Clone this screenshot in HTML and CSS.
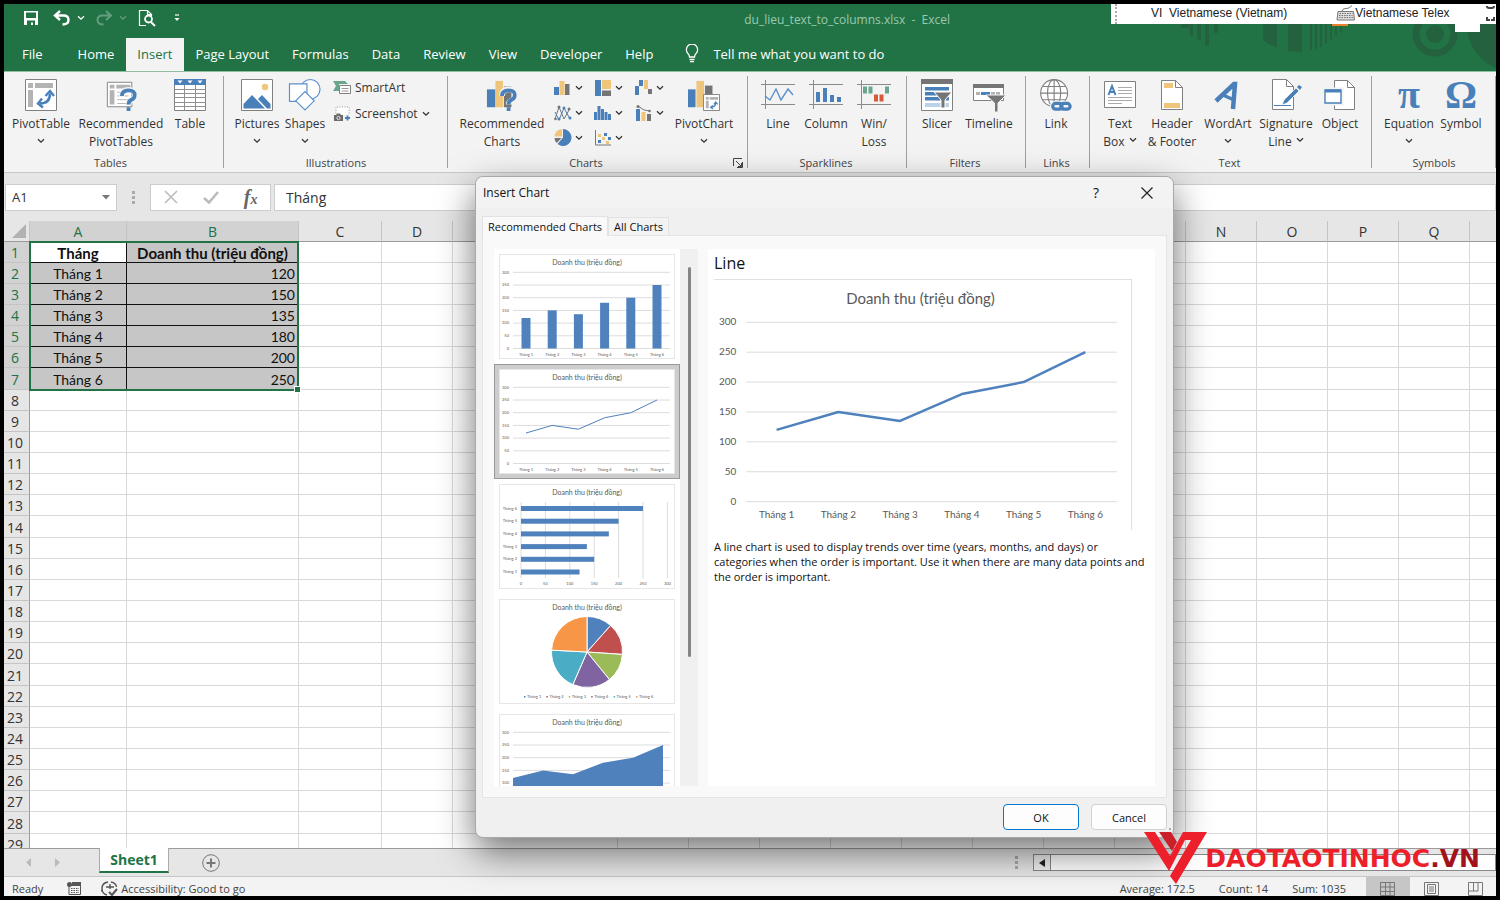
FILE: index.html
```html
<!DOCTYPE html>
<html lang="en">
<head>
    <meta charset="UTF-8">
    <meta name="viewport" content="width=device-width, initial-scale=1.0">
    <title>du_lieu_text_to_columns.xlsx - Excel</title>
    <link rel="stylesheet" href="styles.css">
</head>
<body>
    <svg class="defs" width="0" height="0" aria-hidden="true">
        <symbol id="chev" viewBox="0 0 8 6"><path d="M1 1.2l3 3 3-3" fill="none" stroke="currentColor" stroke-width="1.3"/></symbol>
    </svg>
    <div class="app">
        <header class="top">
            <svg class="pattern" width="385" height="68" viewBox="0 0 385 68" aria-hidden="true">
                <g fill="#24623f">
                    <path d="M79 20h3v12h-3zM86 20h4v16h-4zM94 20h4v22h-4zM103 20h4v9h-4zM70 20h8v4h-8z"/>
                    <path d="M71 20h14v23q-9-2-14-7z" transform="translate(81 0)"/>
                    <path d="M177 20h14v28l-14-1z"/>
                    <path d="M199 20h2v26h-2zM204 20h2v25h-2zM209 20h2v23h-2zM214 20h2v20h-2zM219 20h2v16h-2zM224 20h2v12h-2zM229 20h2v8h-2z"/>
                    <path d="M278 20q4 34 30 44V20z" transform="translate(77 0)"/>
                </g>
                <circle cx="324" cy="30" r="19" fill="none" stroke="#24623f" stroke-width="7"/>
                <circle cx="324" cy="30" r="9" fill="#24623f"/>
                <path d="M221 20h16v2h-16z" fill="#e8822b"/>
                <path d="M344 20h25v8h-25z" fill="#fff"/>
            </svg>
            <div class="title-row">
                <div class="quick">
                    <button aria-label="Save"><svg width="16" height="16" viewBox="0 0 16 16"><path d="M1 1h14v14H1z" fill="#fff"/><path d="M3 2.500h10v5.500H3zM4 10.500h8V15h-2v-2.500H8V15H4z" fill="#217346"/></svg></button>
                    <button aria-label="Undo" class="undo"><svg width="18" height="16" viewBox="0 0 18 16"><path d="M7 1L2 5.500 7 10M2.500 5.500h8q5 0 5 4.500t-6 4.500" fill="none" stroke="#fff" stroke-width="2.400"/></svg></button>
                    <svg class="mini" width="8" height="6"><use href="#chev"/></svg>
                    <button aria-label="Redo" class="faded redo"><svg width="18" height="16" viewBox="0 0 18 16"><path d="M11 1l5 4.500L11 10M15.500 5.500h-8q-5 0-5 4.500t6 4.500" fill="none" stroke="#fff" stroke-width="2"/></svg></button>
                    <svg class="mini faded" width="8" height="6"><use href="#chev"/></svg>
                    <button aria-label="Print preview" class="preview-btn"><svg width="18" height="18" viewBox="0 0 18 18"><path d="M8 16.500H1.500V1.500h8l4 4V7M9.500 1.500v4h4" fill="none" stroke="#fff" stroke-width="1.200"/><circle cx="10.500" cy="10" r="3.500" fill="none" stroke="#fff" stroke-width="1.800"/><path d="M13 13l4 4" stroke="#fff" stroke-width="2"/></svg></button>
                    <button aria-label="Customize toolbar" class="more"><svg width="6" height="8" viewBox="0 0 6 8"><path d="M1 1h4" stroke="#fff" stroke-width="1.200"/><path d="M.5 4h5L3 7z" fill="#fff"/></svg></button>
                </div>
                <h1 class="file-name">du_lieu_text_to_columns.xlsx&nbsp; -&nbsp; Excel</h1>
                <div class="lang-bar">
                    <span class="grip"></span>
                    <button class="lang">VI&nbsp; Vietnamese (Vietnam)</button>
                    <button class="lang"><svg width="19" height="17" viewBox="0 0 19 17"><path d="M2 6.500h15.500l1 8.500H1z" fill="#ddd" stroke="#777"/><path d="M3.500 8.500h13M3 10.500h13.500M3 12.500h14" stroke="#777" stroke-width="1.200" stroke-dasharray="1.500 1"/><path d="M6 6q1-3 4-2.500t6-3" fill="none" stroke="#777"/></svg>Vietnamese Telex</button>
                    <svg class="lang-end" width="10" height="18" viewBox="0 0 10 18"><path d="M1 1q0 2 2 2h3q2 0 2-2M1 12v3h3M8 12v3H5" fill="none" stroke="#444" stroke-width="2"/></svg>
                </div>
            </div>
            <nav class="tabs">
                <button class="tab file">File</button>
                <button class="tab">Home</button>
                <button class="tab active">Insert</button>
                <button class="tab">Page Layout</button>
                <button class="tab">Formulas</button>
                <button class="tab">Data</button>
                <button class="tab">Review</button>
                <button class="tab">View</button>
                <button class="tab">Developer</button>
                <button class="tab">Help</button>
                <button class="tab tell"><svg width="14" height="19" viewBox="0 0 14 19"><path d="M4.500 13q0-2.200-1.800-3.800A5.600 5.600 0 1 1 11.300 9.200Q9.500 10.800 9.500 13zM4.500 15.500h5M5 17.700h4" fill="none" stroke="#fff" stroke-width="1.300"/></svg>Tell me what you want to do</button>
            </nav>
        </header>

        <div class="ribbon">
            <section class="group g-tables">
                <div class="tools">
                    <button class="tool w70">
                        <svg width="32" height="32" viewBox="0 0 32 32"><path d="M.5.500h31v31H.500z" fill="#fff" stroke="#808080"/><path d="M3 4h5v5H3zM10 4h18v5H10zM3 11h5v17H3z" fill="#b3b3b3"/><path d="M15 24.500q10 0 10-10" fill="none" stroke="#4a80b9" stroke-width="2.600"/><path d="M20.500 17l4.500-5 4 5M17 19.500L13 24.500l5 4" fill="none" stroke="#4a80b9" stroke-width="2.400"/></svg>
                        <span>PivotTable</span><svg class="drop" width="8" height="6"><use href="#chev"/></svg>
                    </button>
                    <button class="tool w90">
                        <svg width="32" height="34" viewBox="0 0 32 34"><path d="M1.500 3.500h26v26h-26z" fill="#fff" stroke="#808080"/><path d="M4 6h5v4H4zM11 6h15v4H11zM4 12h5v15H4z" fill="#b3b3b3"/><path d="M12 14h12M12 18h12M12 22h12M12 26h12" stroke="#b3b3b3"/><path d="M17 19q0-7.500 7-7.500t6.500 6q0 3-3.500 5-3 1.500-3 5" fill="none" stroke="#f3f3f3" stroke-width="6"/><path d="M17 18q0-6 7-6t6.500 5.500q0 3-3.500 4.500-3 1.500-3 5" fill="none" stroke="#4a80b9" stroke-width="4"/><path d="M22 30h4v4h-4z" fill="#4a80b9"/></svg>
                        <span>Recommended<br>PivotTables</span>
                    </button>
                    <button class="tool w48">
                        <svg width="32" height="32" viewBox="0 0 32 32"><path d="M.5.500h31v31H.500z" fill="#fff" stroke="#808080"/><path d="M.5 10.500h31M.5 14.500h31M.5 18.500h31M.5 23.500h31M.5 27.500h31M10.500 5v26M21.500 5v26" stroke="#909090"/><path d="M0 0h32v6H0z" fill="#4a80b9"/><path d="M3.500 1.500h5L6 4.500zM13.500 1.500h5L16 4.500zM23.500 1.500h5L26 4.500z" fill="#fff"/></svg>
                        <span>Table</span>
                    </button>
                </div>
                <h2>Tables</h2>
            </section>
            <section class="group g-illus wide">
                <div class="tools">
                    <button class="tool w48">
                        <svg width="32" height="32" viewBox="0 0 32 32"><path d="M.5.500h31v31H.500z" fill="#fff" stroke="#808080"/><circle cx="24" cy="8" r="3.200" fill="#eec57a"/><path d="M2.500 29.500V25L11 16l13 13.500z" fill="#4a80b9"/><path d="M17 20l4-4 8.500 9v4.500H26z" fill="#4a80b9"/></svg>
                        <span>Pictures</span><svg class="drop" width="8" height="6"><use href="#chev"/></svg>
                    </button>
                    <button class="tool w48">
                        <svg width="34" height="33" viewBox="0 0 34 33"><g fill="#fff" stroke="#5b90cc" stroke-width="1.200"><circle cx="22.500" cy="10.500" r="10"/><path d="M1 5h18v18H1z"/><path d="M17 13l9.500 9.500L17 32l-9.500-9.500z"/></g></svg>
                        <span>Shapes</span><svg class="drop" width="8" height="6"><use href="#chev"/></svg>
                    </button>
                    <div class="small-tools">
                        <button class="small"><svg width="18" height="16" viewBox="0 0 18 16"><path d="M0 1h12l3 3h-9v7H0l3-5z" fill="#6aa58d"/><path d="M6.500 5.500h11v8h-11z" fill="#fff" stroke="#808080"/><path d="M8.500 8.500h7M8.500 11h7" stroke="#999"/></svg>SmartArt</button>
                        <button class="small"><svg width="18" height="16" viewBox="0 0 18 16"><path d="M3 10V1h13v7" fill="#fff" stroke="#999" stroke-dasharray="1 1.500"/><path d="M1 9h2l1-1.500h3L8 9h2v6H1z" fill="#6b6b6b"/><circle cx="5.500" cy="12" r="1.600" fill="#6b6b6b" stroke="#fff" stroke-width=".8"/><path d="M12 12h5M14.500 9.500v5" stroke="#4a80b9" stroke-width="1.800"/></svg>Screenshot<svg class="side" width="8" height="6"><use href="#chev"/></svg></button>
                    </div>
                </div>
                <h2>Illustrations</h2>
            </section>
            <section class="group g-charts wide">
                <div class="tools">
                    <button class="tool w90">
                        <svg width="34" height="34" viewBox="0 0 34 34"><path d="M1 11h9v19H1z" fill="#4a80b9"/><path d="M10 2h8v28h-8z" fill="#eec57a"/><path d="M19 8h8v22h-8z" fill="#757575"/><path d="M17 18q0-7 7.500-7t6.500 6-4 6q-3 1.500-3 4" fill="none" stroke="#f3f3f3" stroke-width="6"/><path d="M17 18q0-6 7-6t6.500 5.500q0 3-3.500 4.500-3 1.500-3 5" fill="none" stroke="#4a80b9" stroke-width="4"/><path d="M22 30h4v4h-4z" fill="#4a80b9"/></svg>
                        <span>Recommended<br>Charts</span>
                    </button>
                    <div class="chart-kinds">
                        <button aria-label="Column chart"><svg width="18" height="16" viewBox="0 0 18 16"><path d="M0 7h5v8H0z" fill="#4a80b9"/><path d="M5.500 1h5v14h-5z" fill="#eec57a"/><path d="M11 4h4.500v11H11z" fill="#757575"/></svg><svg width="8" height="6"><use href="#chev"/></svg></button>
                        <button aria-label="Hierarchy chart"><svg width="18" height="16" viewBox="0 0 18 16"><path d="M1 0h6v16H1z" fill="#4a80b9"/><path d="M8 0h9v9H8z" fill="#eec57a"/><path d="M8 10.500h9v5.500H8z" fill="#757575"/></svg><svg width="8" height="6"><use href="#chev"/></svg></button>
                        <button aria-label="Waterfall chart"><svg width="18" height="16" viewBox="0 0 18 16"><path d="M0 6h4v9H0zM4 0h4v6H4z" fill="#4a80b9"/><path d="M9 0h4v9H9z" fill="#eec57a"/><path d="M13 9h4v5h-4z" fill="#757575"/></svg><svg width="8" height="6"><use href="#chev"/></svg></button>
                        <button aria-label="Line chart"><svg width="18" height="16" viewBox="0 0 18 16"><path d="M1 14L5 2l5 12 5-9" fill="none" stroke="#777"/><path d="M1 7l4 8 5-12 6 11" fill="none" stroke="#4a80b9"/><g fill="#777"><circle cx="5" cy="2" r="1.500"/><circle cx="15" cy="4" r="1.500"/><circle cx="1.500" cy="14" r="1.300"/></g><g fill="#4a80b9"><circle cx="10" cy="3" r="1.500"/><circle cx="5" cy="14" r="1.500"/><circle cx="16" cy="13" r="1.500"/></g></svg><svg width="8" height="6"><use href="#chev"/></svg></button>
                        <button aria-label="Statistic chart"><svg width="18" height="16" viewBox="0 0 18 16"><path d="M0 7h3v8H0zM3.500 1h3v14h-3zM7 4h3v11H7zM10.500 7h3v8h-3zM14 9h3v6h-3z" fill="#4a80b9"/></svg><svg width="8" height="6"><use href="#chev"/></svg></button>
                        <button aria-label="Combo chart"><svg width="18" height="16" viewBox="0 0 18 16"><path d="M1 4h4v12H1z" fill="#4a80b9"/><path d="M6.500 7h4v9h-4z" fill="#eec57a"/><path d="M12 9h4v7h-4z" fill="#757575"/><path d="M3 1l6 4 6 1" fill="none" stroke="#757575"/><circle cx="3" cy="1.500" r="1.500" fill="#757575"/><circle cx="14.500" cy="6" r="1.300" fill="#757575"/></svg><svg width="8" height="6"><use href="#chev"/></svg></button>
                        <button aria-label="Pie chart"><svg width="18" height="17" viewBox="0 0 18 17"><path d="M9 8.500V0a8.500 8.500 0 1 1-5.500 15z" fill="#4a80b9"/><path d="M8 7.500V0A8 8 0 0 0 .5 7.500z" fill="#eec57a"/><path d="M7.500 9H.5q0 3 2.300 5z" fill="#757575"/></svg><svg width="8" height="6"><use href="#chev"/></svg></button>
                        <button aria-label="Scatter chart"><svg width="18" height="16" viewBox="0 0 18 16"><path d="M1.500 0v15H17" fill="none" stroke="#777"/><path d="M4 10h3v3H4zM10 3h3v3h-3zM14 7h3v3h-3z" fill="#4a80b9"/><path d="M4 4h3v3H4zM8 7h3v3H8zM12 11h3v3h-3z" fill="#eec57a"/></svg><svg width="8" height="6"><use href="#chev"/></svg></button>
                    </div>
                    <button class="tool w70">
                        <svg width="34" height="34" viewBox="0 0 34 34"><path d="M0 11h8v19H0z" fill="#4a80b9"/><path d="M9 2h8v28H9z" fill="#eec57a"/><path d="M18 7h8v10h-8z" fill="#757575"/><path d="M16.500 16.500h17v17h-17z" fill="#fff" stroke="#808080"/><path d="M19 19h3v3h-3zM23 19h9v3h-9zM19 23h3v8h-3z" fill="#b3b3b3"/><path d="M24.500 30q5 0 5-5M27.500 27l2-2.500 2 2.500M26.500 28L24 30l2.500 2" fill="none" stroke="#4a80b9" stroke-width="1.300"/></svg>
                        <span>PivotChart</span><svg class="drop" width="8" height="6"><use href="#chev"/></svg>
                    </button>
                </div>
                <h2>Charts</h2>
                <button class="launcher" aria-label="Charts options"><svg width="10" height="10" viewBox="0 0 10 10"><path d="M.5 8V.500H9M3 3l5 5M9.500 4v5.500H4M8.500 5v3.500H5" fill="none" stroke="#444"/></svg></button>
            </section>
            <section class="group g-spark">
                <div class="tools">
                    <button class="tool w48">
                        <svg width="34" height="32" viewBox="0 0 34 32"><path d="M0 5.500h34M0 25.500h34M4.500 1v29" stroke="#8a8a8a"/><path d="M4 17l5 4 6-11 5 11 7-11 5 6" fill="none" stroke="#5b90cc" stroke-width="1.400"/></svg>
                        <span>Line</span>
                    </button>
                    <button class="tool w48">
                        <svg width="34" height="32" viewBox="0 0 34 32"><path d="M0 5.500h34M0 25.500h34M4.500 1v29" stroke="#8a8a8a"/><path d="M7 13h4v10H7zM14 9h4v14h-4zM21 16h4v7h-4zM28 18h4v5h-4z" fill="#4a80b9"/></svg>
                        <span>Column</span>
                    </button>
                    <button class="tool w48">
                        <svg width="34" height="32" viewBox="0 0 34 32"><path d="M0 5.500h34M0 25.500h34M4.500 1v29" stroke="#8a8a8a"/><path d="M6 7.500h4v7H6zM11.500 7.500h4v7h-4zM28 7.500h4v7h-4z" fill="#6aa58d"/><path d="M17 15.500h4v7h-4zM22.500 15.500h4v7h-4z" fill="#d9593a"/></svg>
                        <span>Win/<br>Loss</span>
                    </button>
                </div>
                <h2>Sparklines</h2>
            </section>
            <section class="group g-filters">
                <div class="tools">
                    <button class="tool w48">
                        <svg width="32" height="32" viewBox="0 0 32 32"><path d="M.5.500h31v31H.500z" fill="#fff" stroke="#808080"/><path d="M0 0h32v5H0z" fill="#757575"/><path d="M4 8h24v3.500H4zM4 13h12v3.500H4zM4 18h24v3.500H4z" fill="#4a80b9"/><path d="M4 24h24v4H4z" fill="#bcd2ea"/><path d="M13 13h18l-7 8v8h-4v-8z" fill="#757575" stroke="#fff"/></svg>
                        <span>Slicer</span>
                    </button>
                    <button class="tool w56">
                        <svg width="34" height="32" viewBox="0 0 34 32"><path d="M1.500 5.500h30v16h-30z" fill="#fff" stroke="#808080"/><path d="M1 5h31v4H1z" fill="#757575"/><path d="M4 13h4v3H4zM19 13h4v3h-4zM24 13h4v3h-4z" fill="#b3b3b3"/><path d="M9 13h9v3H9z" fill="#4a80b9"/><path d="M14 16h20l-8 8v9h-3.500v-9z" fill="#757575" stroke="#f3f3f3"/></svg>
                        <span>Timeline</span>
                    </button>
                </div>
                <h2>Filters</h2>
            </section>
            <section class="group g-links">
                <div class="tools">
                    <button class="tool w48">
                        <svg width="34" height="34" viewBox="0 0 34 34"><g fill="none" stroke="#808080" stroke-width="1.200"><circle cx="15" cy="15" r="14.300" fill="#fff"/><ellipse cx="15" cy="15" rx="7" ry="14.300"/><path d="M15 1v28M1 15h28M3 8h24M3 22h24"/></g><g fill="none" stroke="#f3f3f3" stroke-width="6"><rect x="13.500" y="26" width="10" height="6" rx="3"/><rect x="22" y="26" width="10" height="6" rx="3"/></g><g fill="none" stroke="#4a80b9" stroke-width="3.400"><rect x="13.500" y="26" width="10" height="6" rx="3"/><rect x="22" y="26" width="10" height="6" rx="3"/></g></svg>
                        <span>Link</span>
                    </button>
                </div>
                <h2>Links</h2>
            </section>
            <section class="group g-text">
                <div class="tools">
                    <button class="tool w48">
                        <svg width="32" height="32" viewBox="0 0 32 32"><path d="M.5 2.500h31v26H.500z" fill="#fff" stroke="#808080"/><path d="M4.500 16L8 7l3.500 9M5.500 13h5" fill="none" stroke="#4a80b9" stroke-width="2"/><path d="M14 8.500h14M14 11.500h14M14 14.500h14M4 18.500h24M4 21.500h24M4 24.500h14" stroke="#aaa"/></svg>
                        <span>Text<br>Box<svg class="side" width="8" height="6"><use href="#chev"/></svg></span>
                    </button>
                    <button class="tool w56">
                        <svg width="24" height="32" viewBox="0 0 24 32"><path d="M1.500 1.500h14l7 7v22h-21z" fill="#fff" stroke="#808080"/><path d="M15.500 1.500v7h7" fill="none" stroke="#808080"/><path d="M4 4h9v5H4zM4 24h16v5H4z" fill="#eec57a"/></svg>
                        <span>Header<br>&amp; Footer</span>
                    </button>
                    <button class="tool w56">
                        <svg width="30" height="32" viewBox="0 0 30 32"><path d="M3 22L21 5l1 0-2 25" fill="none" stroke="#4a80b9" stroke-width="4.500"/><path d="M10 16l11 5" fill="none" stroke="#4a80b9" stroke-width="3.500"/></svg>
                        <span>WordArt</span><svg class="drop" width="8" height="6"><use href="#chev"/></svg>
                    </button>
                    <button class="tool w60">
                        <svg width="32" height="32" viewBox="0 0 32 32"><path d="M2.500.500h14l7 7v23h-21z" fill="#fff" stroke="#808080"/><path d="M16.500.500v7h7" fill="none" stroke="#808080"/><path d="M4 26.500h17" stroke="#4a80b9"/><path d="M12 26l2-5L26 9l3 3-12 12z" fill="#4a80b9" stroke="#f3f3f3" stroke-width=".8"/><path d="M27 8l2-2 3 2-2 3z" fill="#4a80b9"/></svg>
                        <span>Signature<br>Line<svg class="side" width="8" height="6"><use href="#chev"/></svg></span>
                    </button>
                    <button class="tool w48">
                        <svg width="32" height="32" viewBox="0 0 32 32"><path d="M10.500 1.500h13l7 7v22h-20z" fill="#fff" stroke="#808080"/><path d="M23.500 1.500v7h7" fill="none" stroke="#808080"/><path d="M0 10h18v15H0z" fill="#fff" stroke="#f3f3f3" stroke-width="3"/><path d="M1 11h16v13H1z" fill="#fff" stroke="#4a80b9" stroke-width="1.400"/><path d="M1 10.500h16v3H1z" fill="#4a80b9"/></svg>
                        <span>Object</span>
                    </button>
                </div>
                <h2>Text</h2>
            </section>
            <section class="group g-symbols wide">
                <div class="tools">
                    <button class="tool w56"><b class="glyph">π</b><span>Equation</span><svg class="drop" width="8" height="6"><use href="#chev"/></svg></button>
                    <button class="tool w48"><b class="glyph">Ω</b><span>Symbol</span></button>
                </div>
                <h2>Symbols</h2>
            </section>
        </div>

        <div class="formula-bar">
            <div class="name-box">
                <input type="text" value="A1" aria-label="Name box">
                <button aria-label="Open name list"><svg width="8" height="5" viewBox="0 0 8 5"><path d="M0 0h8L4 4.500z" fill="#777"/></svg></button>
            </div>
            <span class="dots"></span>
            <div class="fx-box">
                <button aria-label="Cancel entry"><svg width="14" height="14" viewBox="0 0 14 14"><path d="M1 1l12 12M13 1L1 13" stroke="#bbb" stroke-width="1.600"/></svg></button>
                <button aria-label="Confirm entry"><svg width="16" height="14" viewBox="0 0 16 14"><path d="M1 8l5 4.500L15 2" fill="none" stroke="#bbb" stroke-width="2.600"/></svg></button>
                <button class="fx" aria-label="Insert function">f<small>x</small></button>
            </div>
            <input class="formula" type="text" value="Tháng" aria-label="Formula">
        </div>

        <main class="sheet">
            <table class="grid">
                <colgroup id="cols"></colgroup>
                <thead><tr id="letters"></tr></thead>
                <tbody id="rows"></tbody>
            </table>
            <div class="selection"></div>
        </main>

        <div class="sheet-bar">
            <div class="arrows">
                <svg width="6" height="9" viewBox="0 0 6 9"><path d="M5 0v9L0 4.500z" fill="#bbb"/></svg>
                <svg width="6" height="9" viewBox="0 0 6 9"><path d="M1 0v9l5-4.500z" fill="#bbb"/></svg>
            </div>
            <button class="sheet-tab">Sheet1</button>
            <button class="add" aria-label="New sheet"><svg width="18" height="18" viewBox="0 0 18 18"><circle cx="9" cy="9" r="8.300" fill="none" stroke="#777"/><path d="M9 4.500v9M4.500 9h9" stroke="#777" stroke-width="2"/></svg></button>
            <span class="dots push"></span>
            <div class="h-scroll"><button aria-label="Scroll left"><svg width="6" height="8" viewBox="0 0 6 8"><path d="M6 0v8L0 4z" fill="#222"/></svg></button></div>
        </div>

        <footer class="status">
            <span class="ready">Ready</span>
            <svg width="14" height="13" viewBox="0 0 14 13"><path d="M2 3h11.500v9.500H2z" fill="none" stroke="#555"/><path d="M5 0h9v4H5z" fill="#555"/><circle cx="2.500" cy="2.500" r="2.500" fill="#555"/><path d="M4 6.500h8M4 8.500h8M4 10.500h8" stroke="#555" stroke-dasharray="1.500 1"/></svg>
            <span class="access"><svg width="17" height="15" viewBox="0 0 17 15"><path d="M7 1Q1 2 1 7.500T6 14M0 9l2 2M10 1q5 1 5.500 5" fill="none" stroke="#555" stroke-width="1.400"/><path d="M5 6h8M9 3v5" stroke="#555" stroke-width="1.400"/><path d="M8 11l3 3 5-6" fill="none" stroke="#555" stroke-width="2"/></svg>Accessibility: Good to go</span>
            <span class="stats"><span>Average: 172.5</span><span>Count: 14</span><span>Sum: 1035</span></span>
            <div class="views">
                <button class="on" aria-label="Normal view"><svg width="15" height="14" viewBox="0 0 15 14"><path d="M.5.500h14v13H.500zM5.500 0v14M10 0v14M0 5h15M0 9.500h15" fill="none" stroke="#777"/></svg></button>
                <button aria-label="Page layout view"><svg width="15" height="14" viewBox="0 0 15 14"><path d="M.5.500h14v13H.500zM3.500 2.500h8v9h-8zM5 5h5M5 7h5M5 9h5" fill="none" stroke="#777"/></svg></button>
                <button aria-label="Page break view"><svg width="15" height="14" viewBox="0 0 15 14"><path d="M.5.500h14v13H.500zM5.500 0v9M10 0v9M0 9h10" fill="none" stroke="#777"/></svg></button>
            </div>
        </footer>
    </div>

    <div class="dialog" role="dialog" aria-labelledby="dlg-title">
        <div class="dlg-head">
            <h2 id="dlg-title">Insert Chart</h2>
            <button class="help" aria-label="Help">?</button>
            <button class="close" aria-label="Close"><svg width="12" height="12" viewBox="0 0 12 12"><path d="M.5.500l11 11M11.500.500l-11 11" stroke="#222" stroke-width="1.200"/></svg></button>
        </div>
        <div class="dlg-tabs">
            <button class="dlg-tab current">Recommended Charts</button>
            <button class="dlg-tab">All Charts</button>
        </div>
        <div class="dlg-body">
            <div class="thumbs" id="thumbs"></div>
            <div class="scroll"><div class="scroll-thumb"></div></div>
            <div class="preview">
                <h3>Line</h3>
                <svg class="big" id="big" width="418" height="251" viewBox="0 0 418 251"></svg>
                <p>A line chart is used to display trends over time (years, months, and days) or categories when the order is important. Use it when there are many data points and the order is important.</p>
            </div>
        </div>
        <div class="dlg-foot">
            <button class="btn primary">OK</button>
            <button class="btn">Cancel</button>
        </div>
        <span class="resize"></span>
    </div>

    <div class="brand">
        <svg width="64" height="53" viewBox="0 0 64 53"><path d="M15 0h12l6 10-5 9z" fill="#c9202b"/><path d="M0 0h11l15 24L39 0h24L32 52l-6-8L47 8h-6L25 39z" fill="#ed1f2b"/></svg>
        <span class="brand-name">DAOTAOTINHOC<i>.VN</i></span>
    </div>
    <script src="script.js"></script>
</body>
</html>
```

FILE: styles.css
```css
* {
    margin: 0;
    padding: 0;
    box-sizing: border-box;
}
body {
    background-color: #000;
    padding: 4px;
    height: 100vh;
    overflow: hidden;
    position: relative;
    font-family: "Open Sans", "Noto Sans", sans-serif;
    font-size: 12px;
    color: #333;
}
button, input {
    font: inherit;
    color: inherit;
    border: none;
    background: none;
}
button {
    cursor: pointer;
}
svg {
    display: block;
    flex: none;
}
.defs {
    position: absolute;
}
.app {
    height: 100%;
    display: flex;
    flex-direction: column;
    overflow: hidden;
    background-color: #e6e6e6;
}

/* title bar and tabs */
.top {
    position: relative;
    background-color: #217346;
    color: #fff;
    border-bottom: 1px solid #8fbda2;
}
.pattern {
    position: absolute;
    top: 0;
    right: 0;
}
.title-row {
    display: flex;
    height: 34px;
    position: relative;
}
.quick {
    flex: 1;
    display: flex;
    align-items: center;
    padding: 0 0 6px 19px;
}
.undo {
    margin-left: 14px;
}
.mini {
    margin-left: 6px;
}
.redo {
    margin-left: 10px;
}
.preview-btn {
    margin-left: 11px;
}
.more {
    margin-left: 18px;
}
.faded {
    opacity: .3;
}
.file-name {
    font-size: 12px;
    font-weight: 400;
    line-height: 31px;
    color: #9cc9ae;
}
.lang-bar {
    flex: 1;
    height: 20px;
    max-width: 385px;
    margin-left: 161px;
    padding-left: 4px;
    display: flex;
    align-items: center;
    background-color: #fff;
    color: #222;
    overflow: hidden;
}
.lang {
    display: flex;
    align-items: center;
    white-space: nowrap;
    margin-left: 34px;
    padding-bottom: 2px;
    font-family: "Liberation Sans", Arial, sans-serif;
}
.lang + .lang {
    margin-left: 49px;
}
.lang-end {
    margin-left: auto;
}
.grip {
    border-left: 2px dotted #aaa;
    height: 20px;
}
.tabs {
    display: flex;
    height: 33px;
    position: relative;
}
.tab {
    padding: 0 12px 2px 11px;
    font-size: 13px;
    white-space: nowrap;
}
.tab.file {
    padding: 0 24px 2px 18px;
}
.tab.active {
    background-color: #f3f3f3;
    color: #217346;
}
.tab.tell {
    display: flex;
    align-items: center;
    gap: 14px;
    margin-left: 9px;
}

/* ribbon */
.ribbon {
    display: flex;
    height: 100px;
    background-color: #f3f3f3;
}
.group {
    position: relative;
    flex: none;
    padding-left: 6px;
    margin: 4px 0;
    border-right: 1px solid #a0a0a0;
}
.group.wide {
    padding-left: 9px;
}
.g-tables {
    width: 220px;
    padding-left: 2px;
}
.g-illus {
    width: 224px;
}
.g-charts {
    width: 300px;
}
.g-spark {
    width: 159px;
}
.g-filters {
    width: 119px;
}
.g-links {
    width: 64px;
}
.g-text {
    width: 282px;
}
.g-symbols {
    width: 124px;
}
.group h2 {
    margin-left: -8px;
    font-size: 11px;
    line-height: 16px;
    font-weight: 400;
    text-align: center;
    color: #444;
}
.tools {
    display: flex;
    height: 79px;
    padding-top: 3px;
}
.tool {
    display: flex;
    flex-direction: column;
    align-items: center;
    line-height: 18px;
    white-space: nowrap;
}
.tool > svg:first-child, .glyph {
    height: 32px;
    margin-bottom: 4px;
    overflow: visible;
}
.tool > .drop {
    margin-top: 5px;
}
.side {
    display: inline-block;
    margin: 0 0 3px 4px;
}
.w48 {
    width: 48px;
}
.w56 {
    width: 56px;
}
.w60 {
    width: 60px;
}
.w70 {
    width: 70px;
}
.w90 {
    width: 90px;
}
.glyph {
    font-family: "Liberation Serif", "Times New Roman", serif;
    font-size: 40px;
    line-height: 32px;
    color: #4a80b9;
}
.small-tools {
    display: flex;
    flex-direction: column;
    gap: 8px;
    padding-left: 4px;
}
.small {
    display: flex;
    align-items: center;
    gap: 4px;
    line-height: 18px;
}
.small .side {
    margin: 0;
}
.chart-kinds {
    display: grid;
    grid-template-columns: 40px 41px 34px;
    grid-auto-rows: 25px;
    padding-left: 7px;
    align-content: start;
}
.chart-kinds button {
    display: flex;
    align-items: center;
    gap: 3px;
    height: 17px;
}
.g-charts h2 {
    padding-right: 24px;
}
.launcher {
    position: absolute;
    right: 4px;
    bottom: 0;
}

/* formula bar */
.formula-bar {
    display: flex;
    align-items: center;
    height: 49px;
    padding: 0 0 0 1px;
    border-top: 1px solid #c8c8c8;
    font-size: 14px;
}
.name-box, .fx-box, .formula {
    display: flex;
    align-items: center;
    height: 27px;
    background-color: #fff;
    border: 1px solid #cdcdcd;
}
.name-box {
    width: 112px;
    padding: 0 6px;
    font-size: 13px;
}
.name-box input {
    flex: 1;
    min-width: 0;
}
.dots {
    border-left: 3px dotted #aaa;
    height: 13px;
    margin: 0 15px;
}
.fx-box {
    width: 121px;
    justify-content: space-around;
}
.fx {
    font: italic bold 20px "Liberation Serif", serif;
    color: #666;
}
.fx small {
    font-size: 14px;
}
.formula {
    flex: 1;
    min-width: 0;
    margin-left: 3px;
    padding-left: 11px;
}

/* cells */
.sheet {
    flex: 1;
    min-height: 0;
    position: relative;
    overflow: hidden;
    background-color: #fff;
}
.grid {
    table-layout: fixed;
    border-collapse: separate;
    border-spacing: 0;
    width: 1535px;
    font-size: 14px;
    line-height: 18px;
    color: #111;
}
.grid tr {
    height: 21px;
}
.grid tbody tr:nth-child(7n) {
    height: 22px;
}
.grid th {
    padding: 2px 0 0;
    font-weight: 400;
    background-color: #e6e6e6;
    border-right: 1px solid #c4c4c4;
    border-bottom: 1px solid #9b9b9b;
    color: #333;
}
.grid tbody th {
    padding-right: 3px;
    border-right: 1px solid #9b9b9b;
    border-bottom: 1px solid #c4c4c4;
}
.grid th.picked {
    background-color: #d2d2d2;
    color: #217346;
}
.grid td {
    padding: 2px 0 0;
    border-right: 1px solid #d9d9d9;
    border-bottom: 1px solid #d9d9d9;
}
.grid td.data {
    background-color: #c6c6c6;
    border-color: #111;
    font-family: Lato, "Open Sans", sans-serif;
    font-size: 14px;
    text-align: center;
}
.grid td.num {
    text-align: right;
    padding-right: 3px;
}
.grid td.head {
    font-size: 15px;
    font-weight: 700;
}
.grid td.cursor {
    background-color: #fff;
}
.corner {
    position: relative;
}
.corner::after {
    content: "";
    position: absolute;
    right: 3px;
    bottom: 3px;
    border: 7px solid transparent;
    border-right-color: #b2b2b2;
    border-bottom-color: #b2b2b2;
}
.selection {
    position: absolute;
    left: 25px;
    top: 20px;
    width: 270px;
    height: 150px;
    border: 2px solid #217346;
}
.selection::after {
    content: "";
    position: absolute;
    right: -3px;
    bottom: -3px;
    width: 5px;
    height: 5px;
    background-color: #217346;
    outline: 1px solid #fff;
}

/* bottom bars */
.sheet-bar {
    display: flex;
    align-items: center;
    height: 28px;
    border-top: 1px solid #9b9b9b;
}
.arrows {
    display: flex;
    gap: 22px;
    padding-left: 22px;
}
.sheet-tab {
    align-self: flex-start;
    height: 25px;
    width: 70px;
    margin: -1px 0 0 39px;
    background-color: #fff;
    border: 1px solid #aaa;
    border-top: none;
    border-bottom: 2px solid #217346;
    font-size: 14px;
    font-weight: 700;
    color: #217346;
}
.add {
    margin-left: 33px;
}
.dots.push {
    margin-left: auto;
    margin-right: 15px;
}
.h-scroll {
    width: 463px;
    height: 17px;
    background-color: #fff;
    border: 1px solid #888;
}
.h-scroll button {
    width: 17px;
    height: 15px;
    padding-left: 5px;
    background-color: #f0f0f0;
    border-right: 1px solid #888;
}
.status {
    display: flex;
    align-items: center;
    height: 20px;
    padding: 3px 0 0 8px;
    background-color: #f3f3f3;
    border-top: 1px solid #c6c6c6;
    font-size: 11px;
    color: #444;
}
.status > svg {
    margin-left: 24px;
}
.access {
    display: flex;
    align-items: center;
    gap: 3px;
    margin-left: 20px;
}
.stats {
    display: flex;
    gap: 24px;
    margin-left: auto;
    margin-right: 20px;
}
.views {
    display: flex;
    margin: -3px -2px 0 0;
}
.views button {
    width: 44px;
    height: 20px;
    padding: 4px 14px 0;
}
.views .on {
    background-color: #c6c6c6;
}

/* insert chart dialog */
.dialog {
    position: absolute;
    left: 475px;
    top: 176px;
    width: 699px;
    display: flex;
    flex-direction: column;
    background-color: #f0f0f0;
    border: 1px solid #a8a8a8;
    border-radius: 8px;
    box-shadow: 0 14px 36px rgba(0, 0, 0, .55);
    color: #111;
    overflow: visible;
}
.dlg-head {
    display: flex;
    align-items: center;
    height: 31px;
    padding: 0 20px 0 7px;
    background-color: #f3f3f3;
    border-radius: 8px 8px 0 0;
}
.dlg-head h2 {
    flex: 1;
    font-size: 12px;
    font-weight: 400;
}
.help {
    font-size: 14px;
    margin-right: 42px;
}
.dlg-tabs {
    display: flex;
    align-items: flex-end;
    padding: 8px 6px 0;
    position: relative;
}
.dlg-tab {
    height: 18px;
    padding: 0 5px;
    font-size: 11px;
    line-height: 16px;
    border: 1px solid #e2e2e2;
    border-bottom: none;
    background-color: #f3f3f3;
}
.dlg-tab.current {
    height: 20px;
    margin-bottom: -1px;
    background-color: #f9f9f9;
}
.dlg-body {
    display: flex;
    height: 563px;
    margin: 0 6px;
    padding: 13px 11px 11px;
    background-color: #f9f9f9;
    border: 1px solid #e5e5e5;
}
.thumbs {
    width: 186px;
    background-color: #fff;
    overflow: hidden;
}
.thumb {
    display: block;
    width: 100%;
    padding: 4px;
    border: 1px solid transparent;
}
.thumb.on {
    background-color: #cdcdcd;
    border-color: #999;
}
.thumb svg {
    background-color: #fff;
    outline: 1px solid #e6e6e6;
    outline-offset: -1px;
}
.scroll {
    width: 18px;
    padding: 18px 7px 0 8px;
    background-color: #f0f0f0;
}
.scroll-thumb {
    height: 390px;
    border-radius: 2px;
    background-color: #858585;
}
.preview {
    flex: 1;
    margin-left: 10px;
    padding: 3px 6px;
    background-color: #fff;
}
.preview h3 {
    font-size: 16px;
    line-height: 22px;
    font-weight: 400;
}
.big {
    margin-top: 5px;
    border-top: 1px solid #e0e0e0;
    border-right: 1px solid #e0e0e0;
}
.preview p {
    margin-top: 9px;
    font-size: 11px;
    line-height: 15px;
}
.preview svg text, .thumb svg text {
    font-family: Lato, "Open Sans", sans-serif;
    fill: #595959;
}
.dlg-foot {
    display: flex;
    justify-content: flex-end;
    gap: 12px;
    padding: 6px 6px 7px;
}
.btn {
    width: 76px;
    height: 26px;
    font-size: 11px;
    background-color: #fdfdfd;
    border: 1px solid #d0d0d0;
    border-radius: 4px;
}
.btn.primary {
    border-color: #0078d4;
}
.resize {
    position: absolute;
    right: 2px;
    bottom: 3px;
    width: 6px;
    height: 6px;
    border-right: 2px dotted #aaa;
    border-bottom: 2px dotted #aaa;
}

/* site logo */
.brand {
    position: absolute;
    right: 20px;
    bottom: 15px;
    display: flex;
    align-items: center;
}
.brand-name {
    margin-left: -3px;
    font-family: "DejaVu Sans", sans-serif;
    font-size: 25px;
    line-height: 30px;
    font-weight: 700;
    color: #ed1f2b;
}
.brand-name i {
    font-style: normal;
    color: #a3121c;
}
```

FILE: script.js
```js
const months = ['Tháng 1', 'Tháng 2', 'Tháng 3', 'Tháng 4', 'Tháng 5', 'Tháng 6'];
const values = [120, 150, 135, 180, 200, 250];
const title = 'Doanh thu (triệu đồng)';
const blue = '#4f81bd';

// ---------- sheet ----------
const letters = 'ABCDEFGHIJKLMNOPQR'.split('');
const widths = { A: 97, B: 172, C: 83, D: 71, E: 165 };
let cols = '<col style="width:26px">';
let heads = '<th class="corner"></th>';
letters.forEach(l => {
    cols += `<col style="width:${widths[l] || 71}px">`;
    heads += `<th class="${l < 'C' ? 'picked' : ''}">${l}</th>`;
});
document.querySelector('#cols').innerHTML = cols;
document.querySelector('#letters').innerHTML = heads;

let rows = '';
for (let r = 1; r <= 29; r++) {
    rows += `<tr><th class="${r < 8 ? 'picked' : ''}">${r}</th>`;
    if (r == 1) {
        rows += `<td class="data head cursor">Tháng</td><td class="data head">${title}</td>`;
    } else if (r < 8) {
        rows += `<td class="data">${months[r - 2]}</td><td class="data num">${values[r - 2]}</td>`;
    } else {
        rows += '<td></td><td></td>';
    }
    rows += '<td></td>'.repeat(letters.length - 2) + '</tr>';
}
document.querySelector('#rows').innerHTML = rows;

// ---------- charts ----------
const text = (x, y, size, str, anchor = 'middle') =>
    `<text x="${x}" y="${y}" font-size="${size}" text-anchor="${anchor}">${str}</text>`;

// axes shared by column, line and area charts
function axes(o) {
    let out = '';
    for (let i = 0; i <= 6; i++) {
        const y = o.bottom - i * o.step;
        out += `<path d="M${o.left} ${y}H${o.right}" stroke="#dcdcdc"/>`;
        out += text(o.labelX, y + o.size * .3, o.size, i * 50, 'end');
    }
    months.forEach((m, i) => out += text(o.first + i * o.gap, o.bottom + o.catY, o.size, m));
    return out;
}
const points = (o, first, gap) => values.map((v, i) => `${first + i * gap},${o.bottom - v * o.step / 50}`).join(' ');

const small = { left: 14, right: 171, bottom: 94.5, step: 12.7, labelX: 10, size: 4, first: 27, gap: 26.2, catY: 7 };
const large = { left: 32, right: 404, bottom: 222.5, step: 30, labelX: 22, size: 10, first: 62.5, gap: 62, catY: 16 };
const smallTitle = text(88, 11, 7, title);

function columnChart() {
    return smallTitle + axes(small) + values.map((v, i) => {
        const h = v * small.step / 50;
        return `<rect x="${small.first + i * small.gap - 4.5}" y="${small.bottom - h}" width="9" height="${h}" fill="${blue}"/>`;
    }).join('');
}

function lineChart() {
    return smallTitle + axes(small) + `<polyline points="${points(small, small.first, small.gap)}" fill="none" stroke="${blue}"/>`;
}

function barChart() {
    let out = smallTitle;
    for (let i = 0; i <= 6; i++) {
        const x = 22 + i * 24.4;
        out += `<path d="M${x} 18V94" stroke="#dcdcdc"/>` + text(x, 101, 4, i * 50);
    }
    values.forEach((v, i) => {
        const y = 88 - i * 12.7;
        out += text(18, y + 1, 4, months[i], 'end');
        out += `<rect x="22" y="${y - 2.5}" width="${v * 24.4 / 50}" height="5" fill="${blue}"/>`;
    });
    return out;
}

function pieChart() {
    const colors = ['#4f81bd', '#c0504d', '#9bbb59', '#8064a2', '#4bacc6', '#f79646'];
    const total = values.reduce((a, b) => a + b);
    const at = t => `${88 + 35.5 * Math.sin(t)} ${53 - 35.5 * Math.cos(t)}`;
    let out = smallTitle;
    let angle = 0;
    values.forEach((v, i) => {
        const next = angle + v / total * Math.PI * 2;
        out += `<path d="M88 53L${at(angle)}A35.5 35.5 0 0 1 ${at(next)}z" fill="${colors[i]}" stroke="#fff"/>`;
        out += `<rect x="${25 + i * 22.4}" y="97" width="1.5" height="1.5" fill="${colors[i]}"/>`;
        out += text(28 + i * 22.4, 99, 4, months[i], 'start');
        angle = next;
    });
    return out;
}

function areaChart() {
    return smallTitle + axes(small) + `<polygon points="14,94.5 ${points(small, 14, 30)} 164,94.5" fill="${blue}"/>`;
}

document.querySelector('#thumbs').innerHTML = [columnChart, lineChart, barChart, pieChart, areaChart].map((draw, i) =>
    `<button class="thumb${i == 1 ? ' on' : ''}"><svg width="176" height="105" viewBox="0 0 176 105">${draw()}</svg></button>`
).join('');

document.querySelector('#big').innerHTML = text(207, 24, 15, title) + axes(large) +
    `<polyline points="${points(large, large.first, large.gap)}" fill="none" stroke="${blue}" stroke-width="2.5" stroke-linejoin="round"/>`;
```
